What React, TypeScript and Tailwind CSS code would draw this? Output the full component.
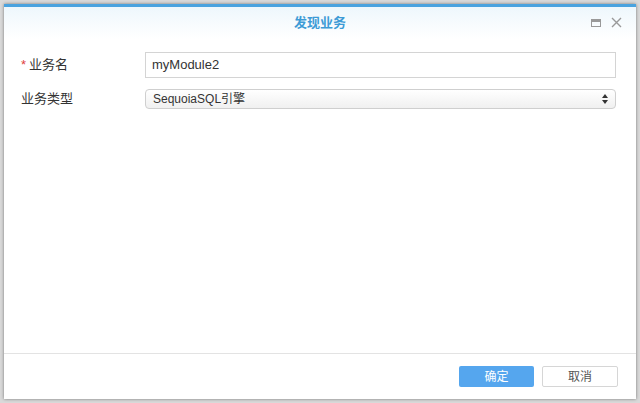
export default function App() {
  const font = { fontFamily: '"Helvetica","Liberation Sans","Noto Sans CJK SC",sans-serif' };
  return (
    <div className="w-[640px] h-[403px] bg-[#d9d9d9] pt-[4px] pl-[4px]" style={font}>
      <div className="w-[632px] h-[395px] bg-white border-t-[3px] border-[#4aa3df] shadow-[0_0_3px_rgba(0,0,0,0.45)] flex flex-col">
        <div className="h-[32px] flex items-center relative bg-gradient-to-b from-[#eef7fc] to-white">
          <div className="flex-1 text-center text-[13px] font-bold text-[#3d9bd6]">发现业务</div>
          <div className="absolute right-[14px] top-[10px] flex items-center gap-[10px]">
            <div className="w-[10px] h-[8px] border border-[#999] border-t-[3px]" />
            <svg width="11" height="11" viewBox="0 0 11 11"><path d="M1 1L10 10M10 1L1 10" stroke="#999" strokeWidth="1.4" /></svg>
          </div>
        </div>
        <div className="flex-1 pt-[13px] pl-[17px] pr-[20px] text-[13px] text-[#333]">
          <div className="flex items-center h-[26px]">
            <div className="w-[124px]"><span className="text-[#e04040] mr-[3px]">*</span>业务名</div>
            <div className="flex-1 h-[26px] border border-[#d4d4d4] px-[6px] flex items-center">myModule2</div>
          </div>
          <div className="flex items-center h-[24px] mt-[9px]">
            <div className="w-[124px]">业务类型</div>
            <div className="flex-1 h-[20px] border border-[#cfcfcf] rounded-[4px] bg-gradient-to-b from-white to-[#f0f0f0] px-[7px] flex items-center justify-between text-[12px]">
              <span>SequoiaSQL引擎</span>
              <svg width="6" height="10" viewBox="0 0 6 10"><path d="M3 0L6 4H0Z M3 10L6 6H0Z" fill="#333" /></svg>
            </div>
          </div>
        </div>
        <div className="h-[46px] border-t border-[#e3e3e3] flex items-center justify-end gap-[8px] pr-[18px]">
          <button className="w-[75px] h-[21px] bg-[#55a6ee] rounded-[2px] text-white text-[12px]">确定</button>
          <button className="w-[76px] h-[21px] border border-[#d6d6d6] rounded-[2px] bg-white text-[#555] text-[12px]">取消</button>
        </div>
      </div>
    </div>
  );
}
